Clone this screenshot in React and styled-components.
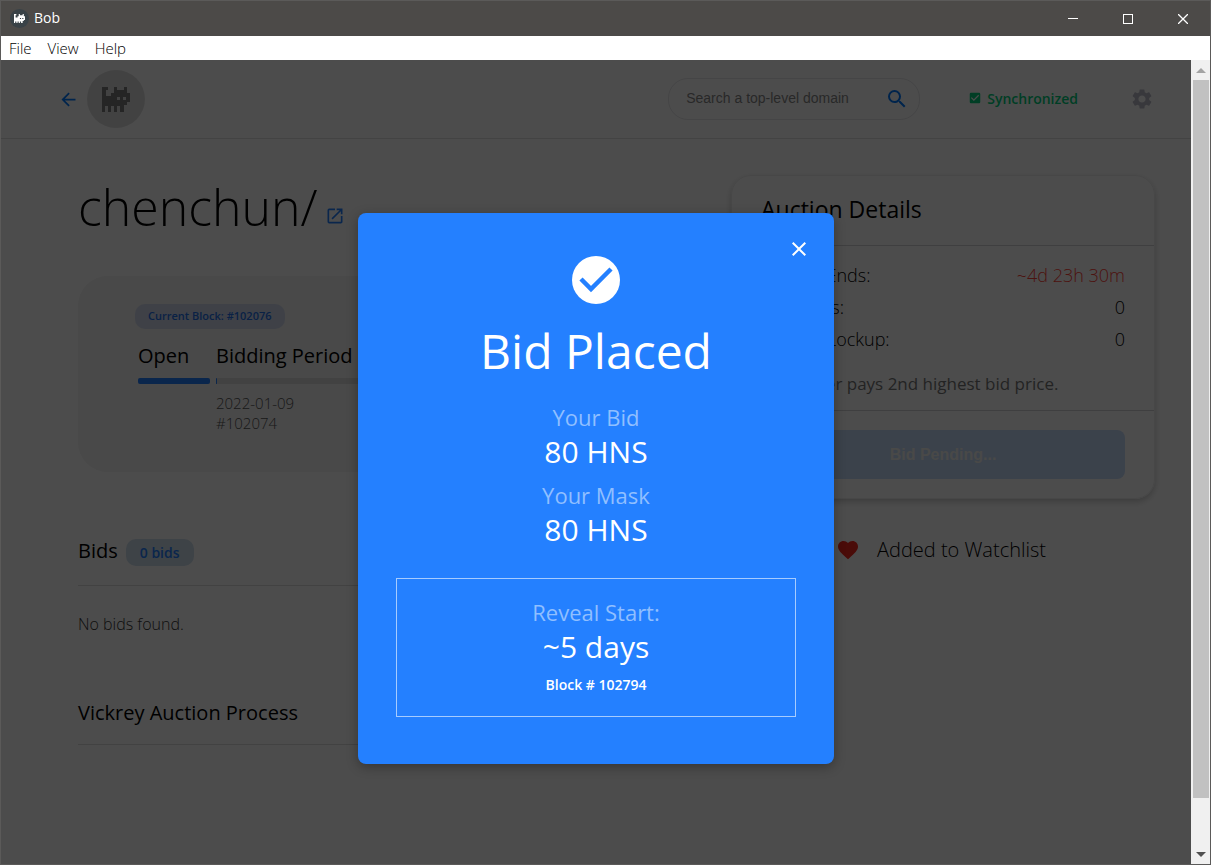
import React from "react";
import styled, { createGlobalStyle } from "styled-components";
import {
  MdArrowBack, MdSearch, MdCheckBox, MdSettings, MdOpenInNew, MdFavorite, MdClose,
} from "react-icons/md";

const Global = createGlobalStyle`
  * { box-sizing: border-box; }
  html, body, #root { height: 100%; }
  body { margin: 0; overflow: hidden; font-family: "Open Sans", "Noto Sans", sans-serif; color: #000; }
  h1, h2, h3, p, dl, dd, dt { margin: 0; font-weight: 400; }
  button { font: inherit; border: 0; background: none; padding: 0; color: inherit; }
  svg { display: block; flex: none; }
`;

const Window = styled.div`
  display: flex;
  flex-direction: column;
  height: 100vh;
  border: 1px solid #5b5a59;
  background: #fff;
`;
const TitleBar = styled.header`
  display: flex;
  align-items: center;
  flex: none;
  height: 35px;
  padding-left: 9px;
  gap: 5px;
  background: #4c4a48;
  color: #fff;
  font-size: 14px;
  line-height: 20px;
`;
const AppBadge = styled.span`
  display: flex;
  align-items: center;
  justify-content: center;
  width: 19px;
  height: 19px;
  border-radius: 50%;
  background: #394247;
`;
const AppName = styled.span`
  padding-bottom: 2px;
`;
const WindowControls = styled.div`
  display: flex;
  margin-left: auto;
`;
const WindowButton = styled.button`
  display: flex;
  align-items: center;
  justify-content: center;
  width: 55px;
  height: 35px;
`;
const MenuBar = styled.nav`
  display: flex;
  align-items: center;
  flex: none;
  height: 24px;
  padding: 0 8px;
  gap: 16px;
  background: #fff;
`;
const MenuItem = styled.button`
  font-size: 15px;
  font-weight: 300;
`;
const Body = styled.div`
  display: flex;
  flex: 1;
  min-height: 0;
`;
const Viewport = styled.div`
  position: relative;
  flex: 1;
  min-width: 0;
  overflow: hidden;
`;
const ScrollTrack = styled.div`
  display: flex;
  flex-direction: column;
  flex: none;
  width: 19px;
  background: #f0f0f0;
`;
const ScrollArrow = styled.button`
  display: flex;
  align-items: center;
  justify-content: center;
  flex: none;
  height: 20px;
  color: ${(p) => p.$color};
`;
const ScrollRail = styled.div`
  flex: 1;
  padding: 0 1px 0 2px;
`;
const ScrollThumb = styled.div`
  height: 94%;
  background: #c1c1c1;
`;

const TopBar = styled.div`
  display: flex;
  align-items: center;
  height: 79px;
  padding: 0 37px 0 57px;
  border-bottom: 1px solid #e0e0e2;
`;
const BackButton = styled.button`
  color: #0078ff;
  margin-right: 8px;
`;
const LogoCircle = styled.div`
  display: flex;
  align-items: center;
  justify-content: center;
  width: 58px;
  height: 58px;
  border-radius: 50%;
  background: #dedede;
`;
const SearchBox = styled.label`
  display: flex;
  align-items: center;
  width: 252px;
  height: 42px;
  margin-left: auto;
  padding: 0 10px 0 17px;
  border: 1px solid #e6e6ea;
  border-radius: 20px;
  color: #0078ff;
`;
const SearchInput = styled.input`
  flex: 1;
  min-width: 0;
  padding: 0 0 2px;
  border: 0;
  outline: 0;
  background: none;
  font: 14px "Liberation Sans", sans-serif;
  &::placeholder { color: #888; opacity: 1; }
`;
const SyncStatus = styled.div`
  display: flex;
  align-items: center;
  gap: 5px;
  margin: 0 52px 0 48px;
  padding-bottom: 2px;
  color: #00d07c;
  font-size: 14px;
  font-weight: 600;
`;
const SettingsButton = styled.button`
  color: #bcbcca;
`;

const Page = styled.main`
  display: flex;
  gap: 80px;
  padding: 36px 36px 0 77px;
`;
const MainColumn = styled.div`
  flex: 1;
  min-width: 0;
`;
const NameRow = styled.div`
  display: flex;
  align-items: flex-end;
  gap: 7px;
  height: 64px;
`;
const DomainName = styled.h1`
  font-size: 50px;
  font-weight: 300;
  line-height: 64px;
`;
const ExternalLink = styled.a`
  padding-bottom: 13px;
  color: #2480ff;
`;
const Timeline = styled.section`
  height: 196px;
  margin-top: 37px;
  padding: 27px 57px;
  border-radius: 30px;
  background: #f3f3f3;
`;
const BlockBadge = styled.span`
  display: inline-block;
  height: 25px;
  padding: 0 13px;
  border-radius: 10px;
  background: #d2dbef;
  color: #2470e8;
  font-size: 11px;
  font-weight: 600;
  line-height: 24px;
`;
const Stages = styled.div`
  display: flex;
  gap: 6px;
  padding-left: 3px;
  margin-top: 13px;
`;
const Stage = styled.div`
  flex: ${(p) => (p.$grow ? "1" : "0 0 72px")};
  min-width: 0;
`;
const StageTitle = styled.h3`
  font-size: 20px;
  line-height: 28px;
  white-space: nowrap;
`;
const StageBar = styled.div`
  height: 6px;
  margin: 8px 0 9px;
  border-radius: 2px;
  background: #dcdcdc;
`;
const StageFill = styled.div`
  height: 6px;
  border-radius: 2px;
  background: #2480ff;
`;
const StageMeta = styled.p`
  color: #555;
  font-size: 15px;
  font-weight: 300;
  line-height: 20px;
`;
const Section = styled.section`
  margin-top: ${(p) => p.$gap}px;
`;
const SectionHeader = styled.div`
  display: flex;
  align-items: center;
  gap: 8px;
  padding-bottom: ${(p) => p.$pad}px;
  border-bottom: 1px solid #dcdcdc;
`;
const SectionTitle = styled.h2`
  padding-bottom: 2px;
  font-size: 20px;
  line-height: 28px;
`;
const CountBadge = styled.span`
  height: 27px;
  padding: 0 14px;
  border-radius: 10px;
  background: #cfdfee;
  color: #2480ff;
  font-size: 14px;
  font-weight: 600;
  line-height: 27px;
`;
const EmptyText = styled.p`
  margin-top: 27px;
  color: #333;
  font-size: 16px;
  font-weight: 300;
  line-height: 22px;
`;

const SideColumn = styled.aside`
  flex: none;
  width: 424px;
`;
const Card = styled.section`
  border: 1px solid #eee;
  border-radius: 20px;
  box-shadow: 0 3px 6px rgba(0, 0, 0, 0.2);
`;
const CardTitle = styled.h2`
  padding: 0 29px 3px;
  border-bottom: 1px solid #d4d4d8;
  font-size: 23px;
  line-height: 66px;
`;
const Details = styled.dl`
  padding: 13px 29px 10px;
  border-bottom: 1px solid #d4d4d8;
  font-size: 18px;
  font-weight: 300;
  line-height: 32px;
`;
const DetailRow = styled.div`
  display: flex;
  justify-content: space-between;
`;
const DetailLabel = styled.dt`
  font-weight: 300;
`;
const DetailValue = styled.dd`
  font-weight: 300;
  color: ${(p) => (p.$alert ? "#ff4136" : "#000")};
`;
const Note = styled.p`
  margin-top: 13px;
  padding-left: 24px;
  color: #777;
  font-size: 17px;
`;
const CardFooter = styled.div`
  padding: 19px 29px;
`;
const PendingButton = styled.button`
  display: block;
  width: 100%;
  height: 49px;
  border-radius: 8px;
  background: #c5dcfc;
  color: #f4f4f0;
  font: bold 16px "Liberation Sans", sans-serif;
`;
const Watchlist = styled.button`
  display: flex;
  align-items: center;
  justify-content: center;
  gap: 17px;
  width: 100%;
  margin-top: 37px;
  padding-right: 4px;
  font-size: 20px;
  font-weight: 300;
  line-height: 28px;
`;
const HeartIcon = styled(MdFavorite)`
  color: #f82a20;
`;

const Backdrop = styled.div`
  position: absolute;
  inset: 0;
  display: flex;
  justify-content: center;
  align-items: flex-start;
  padding-top: 153px;
  background: rgba(0, 0, 0, 0.7);
`;
const Dialog = styled.div`
  position: relative;
  display: flex;
  flex-direction: column;
  align-items: center;
  width: 476px;
  padding: 43px 38px 47px;
  border-radius: 8px;
  background: #2480ff;
  box-shadow: 0 3px 12px rgba(0, 0, 0, 0.3);
  color: #fff;
`;
const CloseButton = styled.button`
  position: absolute;
  top: 24px;
  right: 23px;
`;
const DialogTitle = styled.h2`
  margin: 11px 0 14px;
  font-size: 48px;
  line-height: 72px;
`;
const Fact = styled.div`
  margin-bottom: 8px;
  text-align: center;
`;
const FactLabel = styled.p`
  color: #90bfff;
  font-size: 22px;
  line-height: 32px;
`;
const FactValue = styled.p`
  font-size: 30px;
  line-height: 38px;
`;
const RevealBox = styled.div`
  width: 100%;
  height: 139px;
  margin-top: 21px;
  padding-top: 17px;
  border: 1px solid #a6ccff;
  text-align: center;
`;
const BlockNumber = styled.p`
  margin-top: 9px;
  font-size: 14px;
  font-weight: 600;
  line-height: 20px;
`;

function Cat({ width, color }) {
  return (
    <svg width={width} viewBox="0 0 28 25" fill={color} aria-hidden="true">
      <path fillRule="evenodd" d="M0 0H6V3H4V9H9V6H12V0H15V3H22V0H25V6H28V15H25V18H22V25H18V19H15V25H12V19H9V25H6V19H3V25H0ZM15 10V13H18V10ZM21 10V13H24V10Z" />
    </svg>
  );
}

export default function App() {
  return (
    <Window>
      <Global />
      <TitleBar>
        <AppBadge><Cat width={11} color="#fff" /></AppBadge>
        <AppName>Bob</AppName>
        <WindowControls>
          <WindowButton aria-label="Minimize">
            <svg width="10" height="10" stroke="#fff"><path d="M0 4.5H10" /></svg>
          </WindowButton>
          <WindowButton aria-label="Maximize">
            <svg width="10" height="10" stroke="#fff" fill="none"><rect x=".5" y=".5" width="9" height="9" /></svg>
          </WindowButton>
          <WindowButton aria-label="Close window">
            <svg width="10" height="10" stroke="#fff" strokeWidth="1.3"><path d="M0 0L10 10M10 0L0 10" /></svg>
          </WindowButton>
        </WindowControls>
      </TitleBar>
      <MenuBar>
        <MenuItem>File</MenuItem>
        <MenuItem>View</MenuItem>
        <MenuItem>Help</MenuItem>
      </MenuBar>
      <Body>
        <Viewport>
          <TopBar>
            <BackButton aria-label="Back"><MdArrowBack size={21} /></BackButton>
            <LogoCircle><Cat width={28} color="#7c7c7c" /></LogoCircle>
            <SearchBox>
              <SearchInput aria-label="Search" placeholder="Search a top-level domain" />
              <MdSearch size={24} />
            </SearchBox>
            <SyncStatus><MdCheckBox size={14} />Synchronized</SyncStatus>
            <SettingsButton aria-label="Settings"><MdSettings size={24} /></SettingsButton>
          </TopBar>
          <Page>
            <MainColumn>
              <NameRow>
                <DomainName>chenchun/</DomainName>
                <ExternalLink href="#explorer" aria-label="Open in explorer"><MdOpenInNew size={20} /></ExternalLink>
              </NameRow>
              <Timeline>
                <BlockBadge>Current Block: #102076</BlockBadge>
                <Stages>
                  <Stage>
                    <StageTitle>Open</StageTitle>
                    <StageBar><StageFill /></StageBar>
                  </Stage>
                  <Stage $grow>
                    <StageTitle>Bidding Period</StageTitle>
                    <StageBar><StageFill style={{ width: 1 }} /></StageBar>
                    <StageMeta>2022-01-09</StageMeta>
                    <StageMeta>#102074</StageMeta>
                  </Stage>
                </Stages>
              </Timeline>
              <Section $gap={65}>
                <SectionHeader $pad={18}>
                  <SectionTitle>Bids</SectionTitle>
                  <CountBadge>0 bids</CountBadge>
                </SectionHeader>
                <EmptyText>No bids found.</EmptyText>
              </Section>
              <Section $gap={64}>
                <SectionHeader $pad={15}>
                  <SectionTitle>Vickrey Auction Process</SectionTitle>
                </SectionHeader>
              </Section>
            </MainColumn>
            <SideColumn>
              <Card>
                <CardTitle>Auction Details</CardTitle>
                <Details>
                  <DetailRow><DetailLabel>Bidding Ends:</DetailLabel><DetailValue $alert>~4d 23h 30m</DetailValue></DetailRow>
                  <DetailRow><DetailLabel>Total Bids:</DetailLabel><DetailValue>0</DetailValue></DetailRow>
                  <DetailRow><DetailLabel>Highest Lockup:</DetailLabel><DetailValue>0</DetailValue></DetailRow>
                  <Note>Winner pays 2nd highest bid price.</Note>
                </Details>
                <CardFooter><PendingButton>Bid Pending...</PendingButton></CardFooter>
              </Card>
              <Watchlist><HeartIcon size={24} />Added to Watchlist</Watchlist>
            </SideColumn>
          </Page>
          <Backdrop>
            <Dialog role="dialog" aria-labelledby="dialog-title">
              <CloseButton aria-label="Close"><MdClose size={24} /></CloseButton>
              <svg width="48" height="48" viewBox="0 0 48 48" aria-hidden="true">
                <circle cx="24" cy="24" r="24" fill="#fff" />
                <path d="M9 23L19 33L39 13" fill="none" stroke="#2480ff" strokeWidth="4.5" />
              </svg>
              <DialogTitle id="dialog-title">Bid Placed</DialogTitle>
              <Fact><FactLabel>Your Bid</FactLabel><FactValue>80 HNS</FactValue></Fact>
              <Fact><FactLabel>Your Mask</FactLabel><FactValue>80 HNS</FactValue></Fact>
              <RevealBox>
                <FactLabel>Reveal Start:</FactLabel>
                <FactValue>~5 days</FactValue>
                <BlockNumber>Block # 102794</BlockNumber>
              </RevealBox>
            </Dialog>
          </Backdrop>
        </Viewport>
        <ScrollTrack>
          <ScrollArrow $color="#a3a3a3" aria-label="Scroll up">
            <svg width="10" height="5" fill="currentColor"><path d="M0 5L5 0L10 5Z" /></svg>
          </ScrollArrow>
          <ScrollRail><ScrollThumb /></ScrollRail>
          <ScrollArrow $color="#505050" aria-label="Scroll down">
            <svg width="10" height="5" fill="currentColor"><path d="M0 0L5 5L10 0Z" /></svg>
          </ScrollArrow>
        </ScrollTrack>
      </Body>
    </Window>
  );
}
